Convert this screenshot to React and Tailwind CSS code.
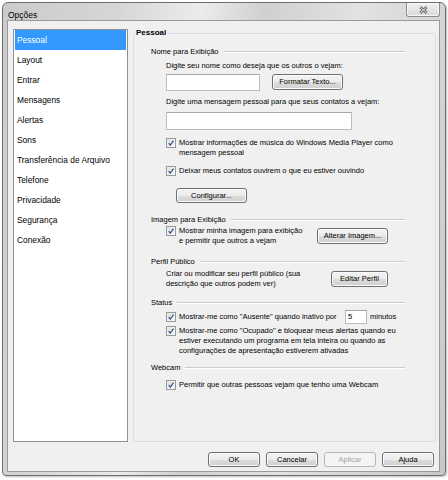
import React from "react";

const ITEMS = ["Pessoal", "Layout", "Entrar", "Mensagens", "Alertas", "Sons", "Transferência de Arquivo", "Telefone", "Privacidade", "Segurança", "Conexão"];

function Check() {
    return (
        <svg width="10" height="10" viewBox="0 0 10 10" className="shrink-0">
            <defs>
                <linearGradient id="cbg" x1="0" y1="0" x2="1" y2="1">
                    <stop offset="0" stopColor="#dcdcdc" />
                    <stop offset="1" stopColor="#fbfbfb" />
                </linearGradient>
            </defs>
            <rect x="0.5" y="0.5" width="9" height="9" fill="#f6f6f6" stroke="#979898" />
            <rect x="1.5" y="1.5" width="7" height="7" fill="url(#cbg)" />
            <path d="M2.7 5.1 L4.3 7.1 L7.5 2.7" fill="none" stroke="#3a5a9c" strokeWidth="1.3" />
        </svg>
    );
}

function CheckRow({ children, className = "" }) {
    return (
        <div className={`flex items-start gap-[3px] ${className}`}>
            <Check />
            <div>{children}</div>
        </div>
    );
}

function Btn({ children, className = "", disabled }) {
    return (
        <div
            className={`flex items-center justify-center rounded-[3px] border text-[7.5px] leading-[10px] ${
                disabled
                    ? "border-[#b5b9bc] bg-[#f4f4f4] text-[#a3a3a3]"
                    : "border-[#707070] bg-[linear-gradient(#f3f3f3_0%,#ebebeb_50%,#dddddd_51%,#cfcfcf_100%)] text-black shadow-[inset_0_0_0_1px_#fbfbfb]"
            } ${className}`}
        >
            {children}
        </div>
    );
}

function Section({ title, className = "" }) {
    return (
        <div className={`flex items-center gap-[5px] pl-[17px] pr-[30px] ${className}`}>
            <span>{title}</span>
            <div className="h-[2px] flex-1 border-t border-b border-t-[#cbcbcb] border-b-white" />
        </div>
    );
}

export default function App() {
    return (
        <div className="w-[448px] h-[480px] bg-white pt-[2px] pl-[2px] font-['Liberation_Sans',Arial,sans-serif] text-black">
            <div className="w-[444px] h-[474px] border border-[#6e6e6e] rounded-t-[6px] rounded-b-[4px] bg-[linear-gradient(100deg,#cbcbcb_0%,#d6d6d6_22%,#ececec_38%,#d0d0d0_50%,#e2e2e2_68%,#c8c8c8_100%)] shadow-[1px_1px_2px_rgba(0,0,0,0.25)] flex flex-col">
                {/* title bar */}
                <div className="h-[17px] flex items-start justify-between pl-[5px] pr-[5px]">
                    <span className="pt-[7px] text-[8.5px] leading-[10px]">Opções</span>
                    <div className="w-[34px] h-[14px] rounded-b-[3px] border border-t-0 border-[#8d8d8d] bg-[linear-gradient(#f0f0f0,#d9d9d9)] shadow-[inset_0_0_0_1px_#f7f7f7] flex items-center justify-center">
                        <svg width="9" height="8" viewBox="0 0 9 8">
                            <path d="M1.2 1 L7.8 7 M7.8 1 L1.2 7" stroke="#5e5e5e" strokeWidth="2.6" />
                            <path d="M1.2 1 L7.8 7 M7.8 1 L1.2 7" stroke="#f2f2f2" strokeWidth="1" />
                        </svg>
                    </div>
                </div>

                {/* client */}
                <div className="ml-[4px] w-[433px] h-[452px] border border-[#9a9a9a] bg-[#f0f0f0] flex flex-col pt-[8px] pl-[5px] pr-[3px]">
                    <div className="flex gap-[5px] h-[413px]">
                        <div className="w-[115px] h-[413px] border border-[#8e9196] bg-white px-[1px] text-[8.4px] leading-[10px]">
                            {ITEMS.map((it, i) => (
                                <div key={it} className={`h-[20px] flex items-center pl-[2px] ${i === 0 ? "bg-[#3399ff] text-white" : ""}`}>
                                    {it}
                                </div>
                            ))}
                        </div>

                        <div className="flex-1 mt-[4px] border border-[#d5dfe5] rounded-[3px] text-[7.5px] leading-[10px]">
                            <div className="-mt-[6px] ml-[1px] w-fit px-[1px] bg-[#f0f0f0] text-[8px] font-bold leading-[10px]">Pessoal</div>

                            <Section title="Nome para Exibição" className="mt-[9px]" />
                            <div className="pl-[32px] mt-[4px]">Digite seu nome como deseja que os outros o vejam:</div>
                            <div className="pl-[32px] mt-[3px] flex items-start">
                                <div className="w-[94px] h-[17px] bg-white border border-[#b9bcc0] border-t-[#a5a8ad]" />
                                <Btn className="ml-[12px] w-[71px] h-[16px]">Formatar Texto...</Btn>
                            </div>
                            <div className="pl-[32px] mt-[6px]">Digite uma mensagem pessoal para que seus contatos a vejam:</div>
                            <div className="ml-[32px] mt-[5px] w-[186px] h-[18px] bg-white border border-[#b9bcc0] border-t-[#a5a8ad]" />
                            <CheckRow className="pl-[32px] mt-[8px]">
                                Mostrar informações de música do Windows Media Player como
                                <br />
                                mensagem pessoal
                            </CheckRow>
                            <CheckRow className="pl-[32px] mt-[8px]">Deixar meus contatos ouvirem o que eu estiver ouvindo</CheckRow>
                            <Btn className="ml-[42px] mt-[12px] w-[71px] h-[15px]">Configurar...</Btn>

                            <Section title="Imagem para Exibição" className="mt-[12px]" />
                            <div className="pl-[32px] mt-[1px] flex items-center">
                                <CheckRow className="w-[151px]">
                                    Mostrar minha imagem para exibição
                                    <br />
                                    e permitir que outros a vejam
                                </CheckRow>
                                <Btn className="w-[71px] h-[16px]">Alterar Imagem...</Btn>
                            </div>

                            <Section title="Perfil Público" className="mt-[11px]" />
                            <div className="pl-[32px] mt-[2px] flex items-center">
                                <div className="w-[165px]">
                                    Criar ou modificar seu perfil público (sua
                                    <br />
                                    descrição que outros podem ver)
                                </div>
                                <Btn className="w-[57px] h-[16px]">Editar Perfil</Btn>
                            </div>

                            <Section title="Status" className="mt-[9px]" />
                            <div className="pl-[32px] mt-[2px] h-[14px] flex items-center">
                                <CheckRow className="w-[179px]">Mostrar-me como &quot;Ausente&quot; quando inativo por</CheckRow>
                                <div className="w-[22px] h-[14px] bg-white border border-[#b9bcc0] border-t-[#a5a8ad] pl-[2px] flex items-center">5</div>
                                <span className="ml-[3px]">minutos</span>
                            </div>
                            <CheckRow className="pl-[32px] mt-[2px]">
                                Mostrar-me como &quot;Ocupado&quot; e bloquear meus alertas quando eu
                                <br />
                                estiver executando um programa em tela inteira ou quando as
                                <br />
                                configurações de apresentação estiverem ativadas
                            </CheckRow>

                            <Section title="Webcam" className="mt-[7px]" />
                            <CheckRow className="pl-[32px] mt-[7px]">Permitir que outras pessoas vejam que tenho uma Webcam</CheckRow>
                        </div>
                    </div>

                    <div className="mt-[10px] flex justify-end gap-[6px] pr-[2px]">
                        <Btn className="w-[52px] h-[15px]">OK</Btn>
                        <Btn className="w-[52px] h-[15px]">Cancelar</Btn>
                        <Btn className="w-[52px] h-[15px]" disabled>Aplicar</Btn>
                        <Btn className="w-[52px] h-[15px]">Ajuda</Btn>
                    </div>
                </div>
            </div>
        </div>
    );
}
